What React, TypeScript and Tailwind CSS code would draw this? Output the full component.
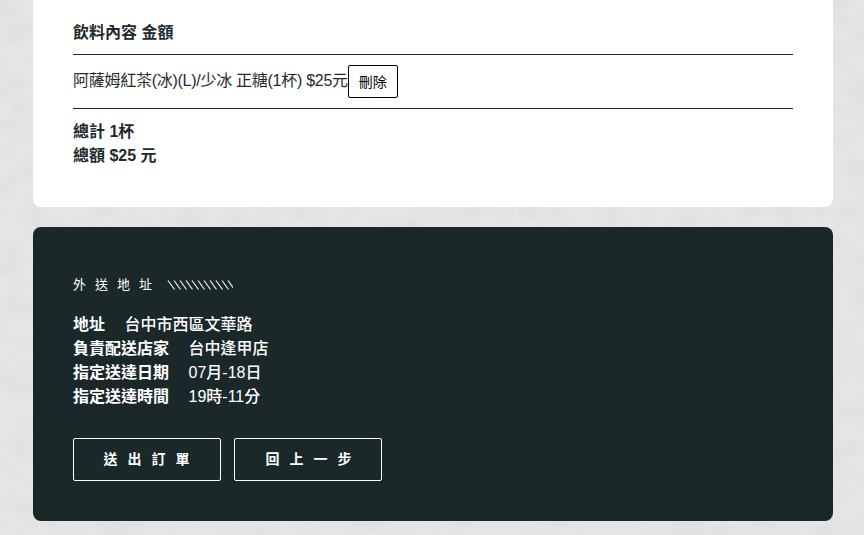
import React from 'react'

const font = '"Liberation Sans", "Noto Sans CJK TC", sans-serif'

const rows = [
  { label: '地址', value: '台中市西區文華路' },
  { label: '負責配送店家', value: '台中逢甲店' },
  { label: '指定送達日期', value: '07月-18日' },
  { label: '指定送達時間', value: '19時-11分' },
]

function Hatch() {
  return (
    <svg width="66" height="11" viewBox="0 0 66 11" className="block" aria-hidden="true">
      {Array.from({ length: 11 }).map((_, i) => (
        <line key={i} x1={1 + i * 6} y1="0.5" x2={7.5 + i * 6} y2="9.5" stroke="#f0f0f0" strokeWidth="1.2" />
      ))}
    </svg>
  )
}

function Concrete() {
  return (
    <svg className="absolute inset-0 w-full h-full" aria-hidden="true">
      <filter id="concrete">
        <feTurbulence type="fractalNoise" baseFrequency="0.04 0.05" numOctaves="6" seed="11" />
        <feColorMatrix values="0 0 0 0 0.5  0 0 0 0 0.5  0 0 0 0 0.5  1.3 0 0 0 -0.52" />
      </filter>
      <rect width="100%" height="100%" filter="url(#concrete)" opacity="0.2" />
    </svg>
  )
}

export default function App() {
  return (
    <div className="relative h-[535px] overflow-hidden bg-[#e5e5e5]" style={{ fontFamily: font }}>
      <Concrete />
      <div className="relative ml-[33px] w-[800px]">
        <div className="bg-white rounded-b-[8px] px-10 pt-[21px] pb-[39px] text-[#1f2a2d] text-base">
          <div className="font-bold leading-6 pb-[9px] border-b border-[#1e2a2d]">飲料內容 金額</div>
          <div className="flex items-center py-[10px] border-b border-[#1e2a2d] leading-6">
            <span className="tracking-[-0.27px] -translate-y-px">阿薩姆紅茶(冰)(L)/少冰 正糖(1杯) $25元</span>
            <button className="h-[33px] w-[50px] border border-black rounded-[2px] text-sm text-black bg-white">刪除</button>
          </div>
          <div className="font-bold leading-6 mt-[11px]">總計 1杯</div>
          <div className="font-bold leading-6">總額 $25 元</div>
        </div>
        <div className="mt-5 h-[294px] bg-[#1b282a] rounded-[8px] px-10 pt-[50px] text-white">
          <div className="flex items-center h-4 text-[13px] tracking-[9px]">
            <span>外送地址</span>
            <span className="ml-[6px]"><Hatch /></span>
          </div>
          <div className="mt-5 text-base leading-6">
            {rows.map((r) => (
              <div key={r.label} className="flex">
                <span className="font-bold mr-[19.5px]">{r.label}</span>
                <span className="font-medium">{r.value}</span>
              </div>
            ))}
          </div>
          <div className="flex gap-[13px] mt-[29px]">
            <button className="w-[148px] h-[43px] pb-px border border-white rounded-[2px] text-sm font-bold tracking-[10px] pl-[9px]">送出訂單</button>
            <button className="w-[148px] h-[43px] pb-px border border-white rounded-[2px] text-sm font-bold tracking-[10px] pl-[11px]">回上一步</button>
          </div>
        </div>
      </div>
    </div>
  )
}
